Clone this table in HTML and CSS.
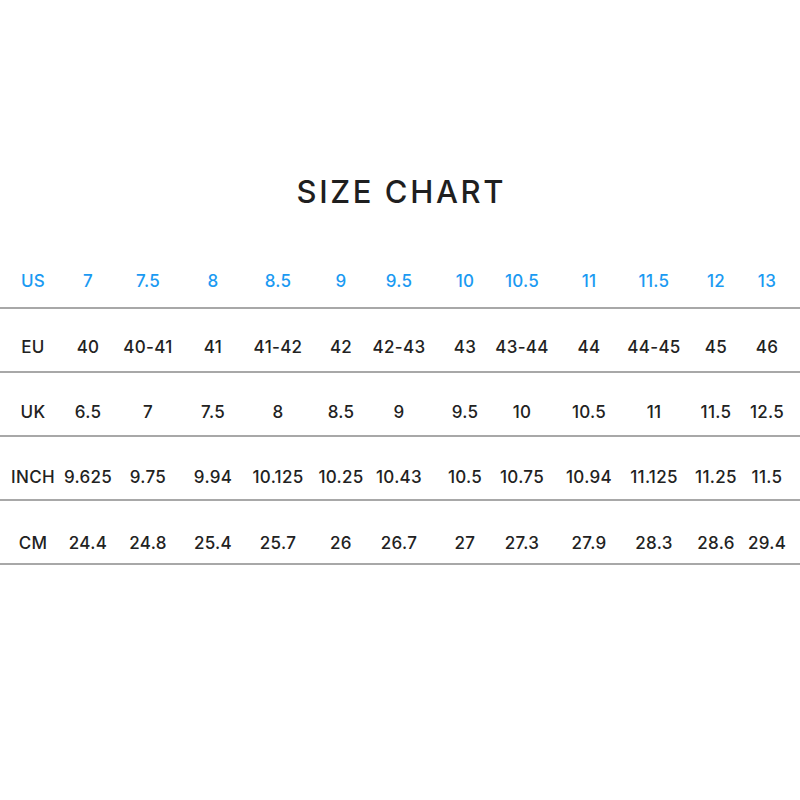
FILE: index.html
```html
<!DOCTYPE html>
<html lang="en">
<head>
<meta charset="utf-8">
<title>Size Chart</title>
<link rel="stylesheet" href="styles.css">
</head>
<body>
<div class="page">
  <h1 class="title">SIZE CHART</h1>
  <div class="chart">
    <div class="row row-us">
      <span class="cell">US</span><span class="cell">7</span><span class="cell">7.5</span><span class="cell">8</span><span class="cell">8.5</span><span class="cell">9</span><span class="cell">9.5</span><span class="cell">10</span><span class="cell">10.5</span><span class="cell">11</span><span class="cell">11.5</span><span class="cell">12</span><span class="cell">13</span>
    </div>
    <div class="row row-eu">
      <span class="cell">EU</span><span class="cell">40</span><span class="cell">40-41</span><span class="cell">41</span><span class="cell">41-42</span><span class="cell">42</span><span class="cell">42-43</span><span class="cell">43</span><span class="cell">43-44</span><span class="cell">44</span><span class="cell">44-45</span><span class="cell">45</span><span class="cell">46</span>
    </div>
    <div class="row row-uk">
      <span class="cell">UK</span><span class="cell">6.5</span><span class="cell">7</span><span class="cell">7.5</span><span class="cell">8</span><span class="cell">8.5</span><span class="cell">9</span><span class="cell">9.5</span><span class="cell">10</span><span class="cell">10.5</span><span class="cell">11</span><span class="cell">11.5</span><span class="cell">12.5</span>
    </div>
    <div class="row row-inch">
      <span class="cell">INCH</span><span class="cell">9.625</span><span class="cell">9.75</span><span class="cell">9.94</span><span class="cell">10.125</span><span class="cell">10.25</span><span class="cell">10.43</span><span class="cell">10.5</span><span class="cell">10.75</span><span class="cell">10.94</span><span class="cell">11.125</span><span class="cell">11.25</span><span class="cell">11.5</span>
    </div>
    <div class="row row-cm">
      <span class="cell">CM</span><span class="cell">24.4</span><span class="cell">24.8</span><span class="cell">25.4</span><span class="cell">25.7</span><span class="cell">26</span><span class="cell">26.7</span><span class="cell">27</span><span class="cell">27.3</span><span class="cell">27.9</span><span class="cell">28.3</span><span class="cell">28.6</span><span class="cell">29.4</span>
    </div>
  </div>
</div>
</body>
</html>
```

FILE: styles.css
```css
html, body {
  margin: 0;
  padding: 0;
  background: #ffffff;
}

body {
  font-family: Inter, "Noto Sans", "Liberation Sans", sans-serif;
  color: #222222;
}

.page {
  width: 800px;
  padding-top: 172px;
}

.title {
  margin: 0;
  height: 40px;
  line-height: 40px;
  text-align: center;
  font-size: 31px;
  font-weight: 500;
  letter-spacing: 2.6px;
  text-indent: 2.6px;
  color: #1f1f1f;
}

.chart {
  margin-top: 33px;
  width: 800px;
}

.row {
  display: grid;
  grid-template-columns: 66px 44px 76px 54px 76px 50px 66px 66px 48px 86px 44px 80px 22px;
  align-items: center;
  box-sizing: border-box;
  height: 64px;
  border-bottom: 2px solid #a8a8a8;
  font-size: 17px;
  font-weight: 500;
  letter-spacing: 0.3px;
}

.cell {
  display: flex;
  justify-content: center;
  white-space: nowrap;
}

.row-us { color: #1b9af2; padding-top: 10px; }
.row-eu { padding-top: 14px; }
.row-uk { padding-top: 16px; }
.row-inch { padding-top: 18px; }
.row-cm { padding-top: 22px; }
```
